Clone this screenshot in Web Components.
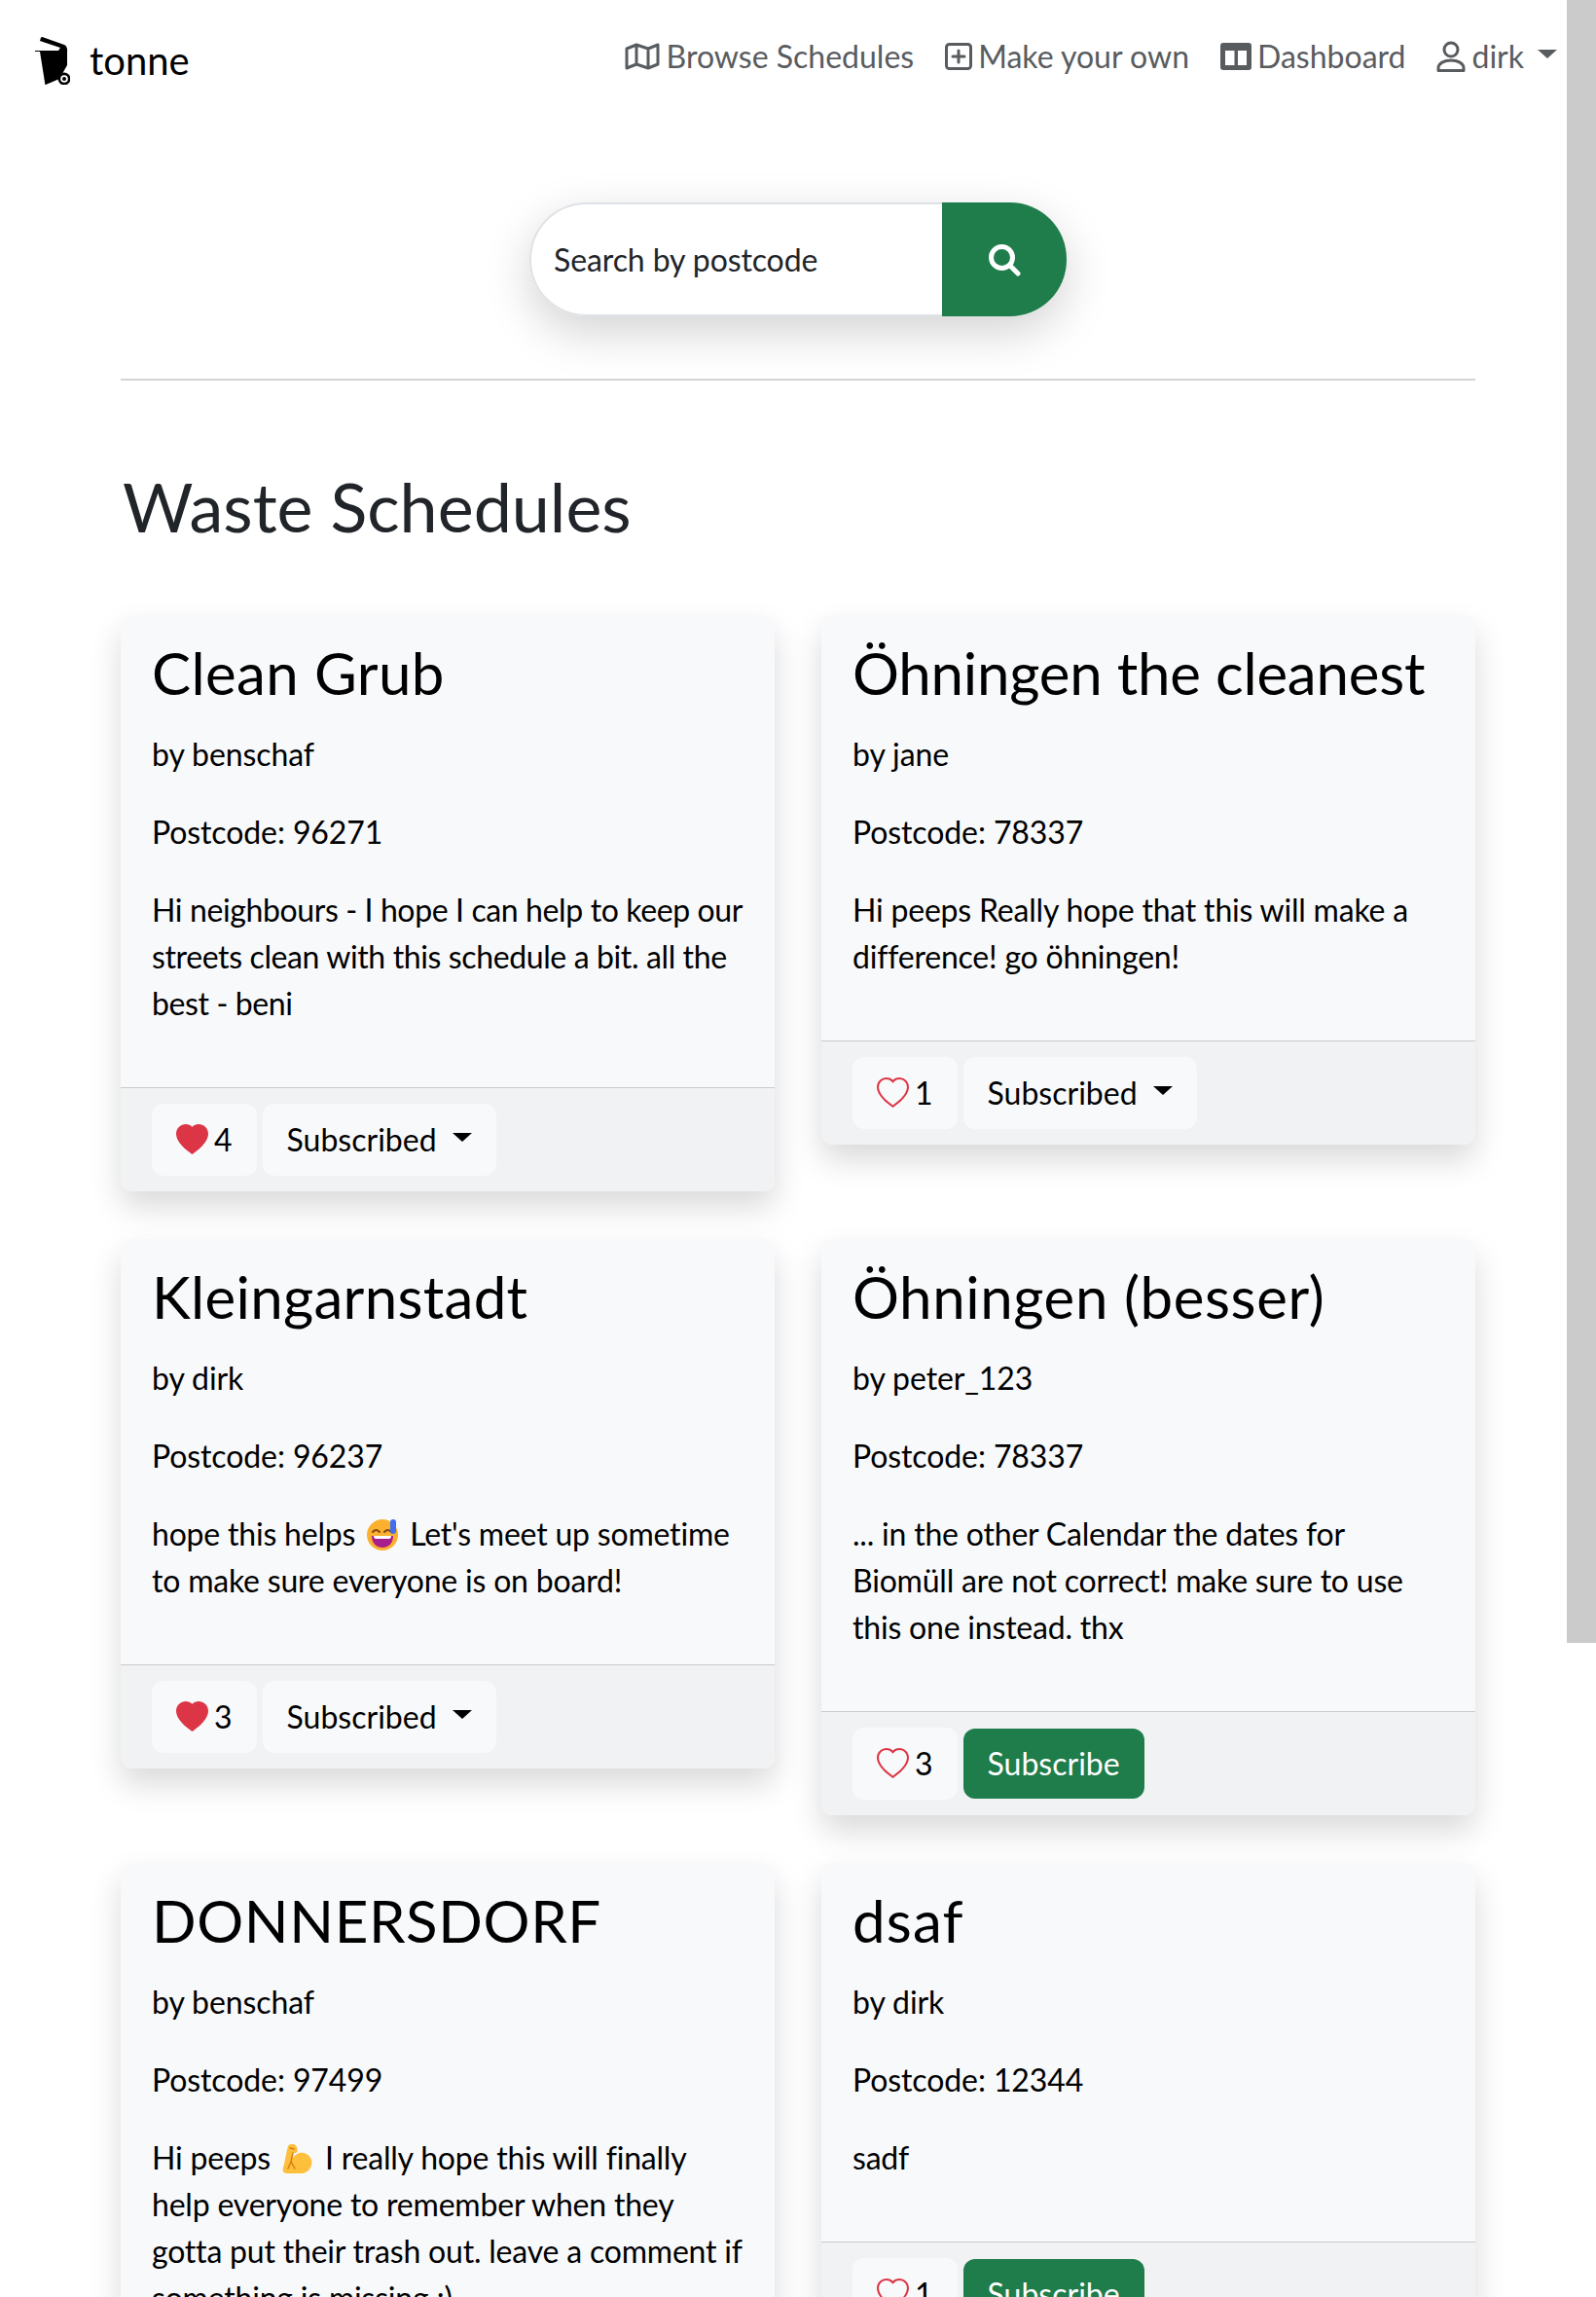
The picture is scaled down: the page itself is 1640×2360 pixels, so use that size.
<!DOCTYPE html>
<html lang="en">
<head>
<meta charset="utf-8">
<title>tonne</title>
<style>
  html { overflow: hidden; }
  body {
    margin: 0;
    background: #fff;
    color: #212529;
    font-family: "Lato", "Liberation Sans", sans-serif;
    font-size: 32px;
    line-height: 1.5;
  }
</style>
</head>
<body>
<app-navbar></app-navbar>
<search-box></search-box>
<schedule-list>
  <schedule-card style="--text-spacing: -.38px" name="Clean Grub" spacing="0.4" author="benschaf" postcode="96271" likes="4" liked subscribed>
    Hi neighbours - I hope I can help to keep our streets clean with this schedule a bit. all the best - beni
  </schedule-card>
  <schedule-card name="Öhningen the cleanest" spacing="-0.2" author="jane" postcode="78337" likes="1" subscribed>
    Hi peeps Really hope that this will make a difference! go öhningen!
  </schedule-card>
  <schedule-card name="Kleingarnstadt" spacing="0.3" author="dirk" postcode="96237" likes="3" liked subscribed>
    hope this helps <emoji-icon kind="sweat"></emoji-icon> Let's meet up sometime to make sure everyone is on board!
  </schedule-card>
  <schedule-card name="Öhningen (besser)" spacing="0.6" author="peter_123" postcode="78337" likes="3">
    ... in the other Calendar the dates for Biomüll are not correct! make sure to use this one instead. thx
  </schedule-card>
  <schedule-card name="DONNERSDORF" spacing="0.6" author="benschaf" postcode="97499" likes="2">
    Hi peeps <emoji-icon kind="muscle"></emoji-icon> I really hope this will finally help everyone to remember when they gotta put their trash out. leave a comment if something is missing ;)
  </schedule-card>
  <schedule-card name="dsaf" spacing="1.2" author="dirk" postcode="12344" likes="1">
    sadf
  </schedule-card>
</schedule-list>
<fake-scrollbar></fake-scrollbar>

<script>
const BOOTSTRAP_HEARTS = {
  heart: '<path d="m8 2.748-.717-.737C5.6.281 2.514.878 1.4 3.053c-.523 1.023-.641 2.500.314 4.385.92 1.815 2.834 3.989 6.286 6.357 3.452-2.368 5.365-4.542 6.286-6.357.955-1.886.838-3.362.314-4.385C13.486.878 10.400.28 8.717 2.010L8 2.748zM8 15C-7.333 4.868 3.279-3.040 7.824 1.143c.06.055.119.112.176.171a3.120 3.120 0 0 1 .176-.17C12.720-3.042 23.333 4.867 8 15z"/>',
  heartFill: '<path d="M8 1.314C12.438-3.248 23.534 4.735 8 15-7.534 4.736 3.562-3.248 8 1.314z"/>',
};

const heart = (name) =>
  `<svg width="33" height="33" viewBox="0 0 16 16" fill="currentColor" aria-hidden="true">${BOOTSTRAP_HEARTS[name]}</svg>`;

const stroked = 'fill="none" stroke="currentColor" stroke-width="3" stroke-linejoin="round" stroke-linecap="round" aria-hidden="true"';

const NAV_ICONS = {
  map: `<svg width="38" height="30" viewBox="0 0 38 30" ${stroked}><path d="M3 7 L13 3 L25 7 L35 3 V23 L25 27 L13 23 L3 27 Z M13 3 V23 M25 7 V27"/></svg>`,
  plus: `<svg width="28" height="28" viewBox="0 0 28 28" ${stroked}><rect x="1.500" y="1.500" width="25" height="25" rx="3"/><path d="M14 8 V20 M8 14 H20"/></svg>`,
  layout: `<svg width="32" height="28" viewBox="0 0 32 28" fill="currentColor" aria-hidden="true"><path fill-rule="evenodd" d="M3 0H29a3 3 0 0 1 3 3V25a3 3 0 0 1-3 3H3a3 3 0 0 1-3-3V3a3 3 0 0 1 3-3zM5 8V23H14.500V8zM18 8V23H27V8z"/></svg>`,
  person: `<svg width="30" height="32" viewBox="0 0 30 32" ${stroked}><circle cx="15" cy="9" r="7"/><path d="M2 30.500 V28 C2 23 8 20 15 20 S28 23 28 28 V30.500 Z"/></svg>`,
  search: `<svg width="34" height="34" viewBox="0 0 34 34" fill="none" stroke="currentColor" stroke-width="5" stroke-linecap="round" aria-hidden="true"><circle cx="14.500" cy="14.500" r="11"/><path d="M23 23 L31 31"/></svg>`,
};

class AppNavbar extends HTMLElement {
  constructor() {
    super();
    this.attachShadow({ mode: "open" });
    this.shadowRoot.innerHTML = `
      <style>
        :host { display: flex; justify-content: space-between; align-items: flex-start; padding: 34px 40px 0 34px; height: 174px; box-sizing: border-box; }
        .brand { display: flex; align-items: center; gap: 20px; font-size: 40px; line-height: 56px; color: #000; }
        .brand svg { display: block; }
        nav { display: flex; gap: 32px; color: #595c5f; line-height: 48px; }
        a { display: flex; align-items: center; gap: 6px; }
        a svg { display: block; }
        .caret { width: 0; height: 0; margin: 0 0 6px 8px; border-top: 9px solid currentColor; border-left: 10px solid transparent; border-right: 10px solid transparent; }
      </style>
      <div class="brand">
        <svg width="38" height="50" viewBox="34 40 38 50" aria-hidden="true">
          <path d="M42 41.500 L43.500 41 L66 49 C68.500 50 69.500 53 69 56 L69 70 L61 84 L47 90 L46.500 90.500 L41 56 L36 56 L36 55 L60 55 L62 52 L41 45 Z" />
          <circle cx="66" cy="84" r="6.500" />
          <circle cx="66" cy="84" r="3.800" fill="#fff" />
          <circle cx="66" cy="84" r="2" />
        </svg>
        <span>tonne</span>
      </div>
      <nav>
        <a>${NAV_ICONS.map}<span>Browse Schedules</span></a>
        <a>${NAV_ICONS.plus}<span>Make your own</span></a>
        <a>${NAV_ICONS.layout}<span>Dashboard</span></a>
        <a>${NAV_ICONS.person}<span>dirk</span><i class="caret"></i></a>
      </nav>
    `;
  }
}

class SearchBox extends HTMLElement {
  constructor() {
    super();
    this.attachShadow({ mode: "open" });
    this.shadowRoot.innerHTML = `
      <style>
        :host { display: block; width: 1392px; margin: 34px auto 0; padding-bottom: 64px; border-bottom: 2px solid #d3d4d5; }
        .group { display: flex; width: 552px; height: 117px; margin: 0 auto; border-radius: 58px; box-shadow: 0 16px 48px rgba(0, 0, 0, .175); }
        .field { flex: 1; display: flex; align-items: center; padding-left: 23px; background: #fff; border: 2px solid #dee2e6; border-right: 0; border-radius: 58px 0 0 58px; color: #212529; letter-spacing: -.1px; }
        button { width: 128px; border: 0; padding: 0; background: #1e7d4a; color: #fff; border-radius: 0 58px 58px 0; display: flex; align-items: center; justify-content: center; }
      </style>
      <div class="group">
        <div class="field">Search by postcode</div>
        <button aria-label="Search">${NAV_ICONS.search}</button>
      </div>
    `;
  }
}

class ScheduleList extends HTMLElement {
  constructor() {
    super();
    this.attachShadow({ mode: "open" });
    this.shadowRoot.innerHTML = `
      <style>
        :host { display: block; width: 1392px; margin: 0 auto; }
        h1 { margin: 86px 0 69px 2px; font: 400 70px/86px "Lato", sans-serif; color: #212529; }
        .grid { display: grid; grid-template-columns: 672px 672px; gap: 49px 48px; align-items: start; }
      </style>
      <h1>Waste Schedules</h1>
      <div class="grid"><slot></slot></div>
    `;
  }
}

class ScheduleCard extends HTMLElement {
  constructor() {
    super();
    this.attachShadow({ mode: "open" });
    const liked = this.hasAttribute("liked");
    const action = this.hasAttribute("subscribed")
      ? `<button class="btn">Subscribed<i class="caret"></i></button>`
      : `<button class="btn primary">Subscribe</button>`;
    this.shadowRoot.innerHTML = `
      <style>
        :host { display: block; background: #f8f9fb; border-radius: 12px; box-shadow: 0 16px 32px rgba(0, 0, 0, .15); color: #000; overflow: hidden; }
        .body { padding: 24px 32px 30px; }
        h2 { margin: 0 0 24px; font: 400 60px/71px "Lato", sans-serif; letter-spacing: ${this.getAttribute("spacing")}px; white-space: nowrap; }
        p { margin: 0 0 32px; letter-spacing: -.1px; }
        p.text { letter-spacing: var(--text-spacing, -.2px); }
        .footer { display: flex; gap: 6px; padding: 16px 32px; background: #f1f2f4; border-top: 1px solid #c9cacc; }
        .btn { display: flex; align-items: center; gap: 8px; font: inherit; color: inherit; height: 74px; padding: 0 24px 0 25px; border: 0; border-radius: 12px; background: #f8f9fa; }
        .btn.like { gap: 6px; padding-right: 25px; }
        .btn.like svg { color: #dc3545; display: block; }
        .btn.primary { background: #1e7d4a; color: #fff; height: 72px; margin-top: 1px; padding: 0 25px; }
        .caret { width: 0; height: 0; margin: 0 1px 6px 8px; border-top: 9px solid currentColor; border-left: 10px solid transparent; border-right: 10px solid transparent; }
      </style>
      <div class="body">
        <h2>${this.getAttribute("name")}</h2>
        <p>by ${this.getAttribute("author")}</p>
        <p>Postcode: ${this.getAttribute("postcode")}</p>
        <p class="text"><slot></slot></p>
      </div>
      <div class="footer">
        <button class="btn like">${heart(liked ? "heartFill" : "heart")}<span>${this.getAttribute("likes")}</span></button>
        ${action}
      </div>
    `;
  }
}

class EmojiIcon extends HTMLElement {
  constructor() {
    super();
    this.attachShadow({ mode: "open" });
    const sweat = `
      <svg width="34" height="34" viewBox="0 0 34 34" aria-hidden="true">
        <circle cx="17" cy="17" r="16" fill="#fbb02f"/>
        <path d="M7 14q3.500-4 7 0M19 14q3.500-4 7 0" fill="none" stroke="#8a4a14" stroke-width="2" stroke-linecap="round"/>
        <path d="M6 18h22c0 8-5 12-11 12S6 26 6 18z" fill="#a81e8c"/>
        <path d="M8 18h18c0 2-1 3-2 3H10c-1 0-2-1-2-3z" fill="#fff"/>
        <rect x="25" y="1" width="6" height="15" rx="3" fill="#3f6ff0"/>
      </svg>`;
    const muscle = `
      <svg width="34" height="34" viewBox="0 0 34 34" aria-hidden="true">
        <path d="M7 4 C9 1 14 1 16 5 C17 8 17 10 15 11 L12 11 L11.500 17 C14 12 20 9 26 12 C31 15 33 21 30 26 C28 30 24 32 20 32 L6 32 C2 32 1 29 2 26 C4 20 5 11 7 4 Z" fill="#fdbf3c"/>
        <path d="M9 6 L13 7 M12 11 L10 20 M10 20 L7 27 M10 20 L14 27" fill="none" stroke="#d67d11" stroke-width="1.500" stroke-linecap="round"/>
      </svg>`;
    this.shadowRoot.innerHTML = `
      <style>
        :host { display: inline-block; width: 34px; height: 34px; margin: 0 3px; vertical-align: -6px; }
        svg { display: block; }
      </style>
      ${this.getAttribute("kind") === "sweat" ? sweat : muscle}
    `;
  }
}

class FakeScrollbar extends HTMLElement {
  constructor() {
    super();
    this.attachShadow({ mode: "open" });
    this.shadowRoot.innerHTML = `
      <style>
        :host { position: fixed; top: 0; right: 0; width: 30px; height: 1688px; background: #cbcbcb; }
      </style>
    `;
  }
}

customElements.define("app-navbar", AppNavbar);
customElements.define("search-box", SearchBox);
customElements.define("schedule-list", ScheduleList);
customElements.define("schedule-card", ScheduleCard);
customElements.define("emoji-icon", EmojiIcon);
customElements.define("fake-scrollbar", FakeScrollbar);
</script>
</body>
</html>
